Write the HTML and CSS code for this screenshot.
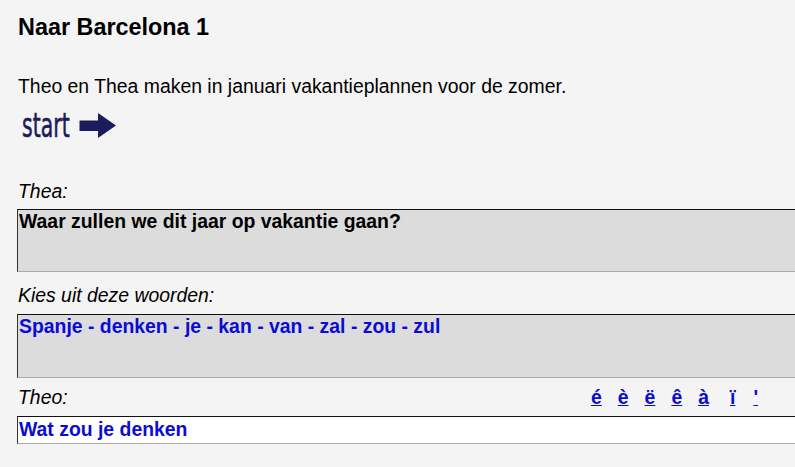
FILE: index.html
```html
<!DOCTYPE html>
<html lang="nl">
<head>
<meta charset="utf-8">
<title>Naar Barcelona 1</title>
<link rel="stylesheet" href="styles.css">
</head>
<body>
<div class="page">
  <h1 class="title">Naar Barcelona 1</h1>
  <p class="intro">Theo en Thea maken in januari vakantieplannen voor de zomer.</p>
  <a class="start" href="#"><span class="start-text">start</span><svg class="start-arrow" width="37" height="25" viewBox="0 0 37 25" aria-hidden="true"><path d="M0.5 8 Q0 7.5 1 7.5 L19 7.5 L19 0 L37 12.5 L19 25 L19 18 L1 18 Q0 18 0.5 17 Z" fill="#1c1c5c"/></svg></a>
  <div class="label label-thea">Thea:</div>
  <div class="box box-gray question">Waar zullen we dit jaar op vakantie gaan?</div>
  <div class="label label-kies">Kies uit deze woorden:</div>
  <div class="box box-gray words">Spanje - denken - je - kan - van - zal - zou - zul</div>
  <div class="theo-row">
    <span class="label">Theo:</span>
    <span class="accents">
      <a href="#">é</a><a href="#">è</a><a href="#">ë</a><a href="#">ê</a><a href="#">à</a><a href="#" class="acc-i">ï</a><a href="#" class="acc-q">'</a>
    </span>
  </div>
  <div class="box box-white answer">Wat zou je denken</div>
</div>
</body>
</html>
```

FILE: styles.css
```css
html, body {
  margin: 0;
  padding: 0;
  background: #f4f4f4;
}
body {
  overflow: hidden;
  font-family: "Liberation Sans", Arial, sans-serif;
  font-size: 19.4px;
  line-height: 22px;
  color: #000;
}
.page {
  padding: 14px 0 0 17px;
  overflow: hidden;
}
.title {
  margin: 0;
  padding-left: 1px;
  font-size: 23.4px;
  line-height: 27px;
  font-weight: bold;
}
.intro {
  margin: 34px 0 0;
  padding-left: 1px;
}
.start {
  margin-top: 16px;
  margin-left: 5px;
  display: flex;
  align-items: flex-start;
  height: 25px;
  text-decoration: none;
  color: #1c1c5c;
}
.start-text {
  display: inline-block;
  width: 48px;
  font-family: "DejaVu Sans", sans-serif;
  font-weight: normal;
  font-size: 33px;
  line-height: 25px;
  white-space: nowrap;
  transform: scaleX(0.62);
  transform-origin: left center;
  -webkit-text-stroke: 0.6px #1c1c5c;
}
.start-arrow {
  margin-left: 9px;
  display: block;
}
.label {
  font-style: italic;
  padding-left: 1px;
}
.label-thea {
  margin-top: 42px;
}
.label-kies {
  margin-top: 12px;
}
.box {
  box-sizing: border-box;
  width: 820px;
  border-top: 1px solid #111;
  border-left: 1px solid #333;
  border-bottom: 1px solid #ababab;
  padding: 0 1px;
  font-weight: bold;
}
.box-gray {
  background: #dcdcdc;
}
.box-white {
  background: #fff;
}
.question {
  margin-top: 7px;
  height: 63px;
}
.words {
  margin-top: 8px;
  height: 64px;
  color: #0b0bd6;
}
.theo-row {
  margin-top: 8px;
  width: 741px;
  display: flex;
  justify-content: space-between;
  height: 22px;
}
.accents {
  display: flex;
  gap: 16px;
  font-weight: bold;
}
.accents a {
  color: #0b0bd6;
  text-decoration: underline;
}
.accents .acc-i {
  margin-left: 5px;
}
.accents .acc-q {
  margin-left: 2px;
}
.answer {
  margin-top: 8px;
  height: 28px;
  padding-top: 1px;
  color: #0b0bd6;
}
```
